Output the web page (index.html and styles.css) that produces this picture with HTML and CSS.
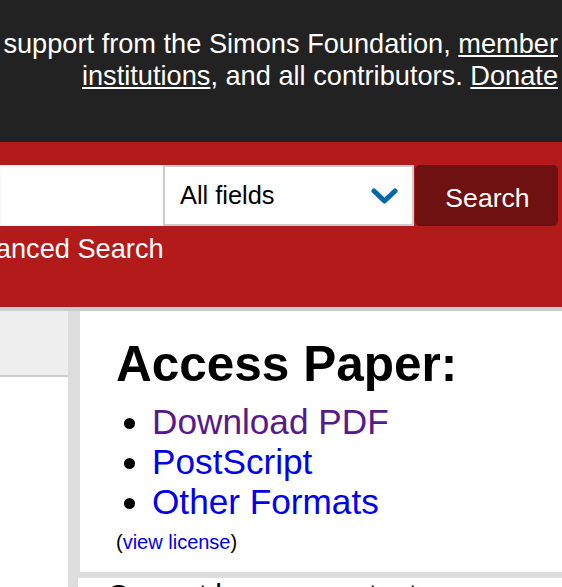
FILE: index.html
```html
<!DOCTYPE html>
<html lang="en">
<head>
	<meta charset="UTF-8">
	<title>Access Paper</title>
<link rel="stylesheet" href="styles.css">
</head>
<body>
	<div class="support">
		<div class="line">support from the Simons Foundation,&nbsp;<a href="#">member</a></div>
		<div class="line"><a href="#">institutions</a>, and all contributors.&nbsp;<a href="#">Donate</a></div>
	</div>
	<div class="searchbar">
		<form class="search-row">
			<input type="text" class="query" aria-label="Search term">
			<div class="field">
				<span>All fields</span>
				<svg width="27" height="17" viewBox="0 0 27 17"><path d="M3 3 L13.5 13 L24 3" fill="none" stroke="#0068ac" stroke-width="5" stroke-linecap="round" stroke-linejoin="round"/></svg>
			</div>
			<button type="button" class="go">Search</button>
		</form>
		<a href="#" class="advanced">Advanced Search</a>
	</div>
	<div class="main">
		<div class="left">
			<div class="left-top"></div>
		</div>
		<div class="extra">
			<div class="full-text">
				<h2>Access Paper:</h2>
				<ul>
					<li><a href="#" class="visited">Download PDF</a></li>
					<li><a href="#">PostScript</a></li>
					<li><a href="#">Other Formats</a></li>
				</ul>
				<div class="license">(<a href="#">view license</a>)</div>
			</div>
			<div class="browse">Current browse context:</div>
		</div>
	</div>
</body>
</html>
```

FILE: styles.css
```css
body{
	margin: 0;
	font-family: "Liberation Sans", Arial, sans-serif;
	overflow: hidden;
}
a{
	color: #00e;
	text-decoration: none;
}
.support{
	background: #222;
	color: #fff;
	height: 142px;
	box-sizing: border-box;
	padding: 28px 4px 0 0;
	font-size: 27.2px;
}
.line{
	display: flex;
	justify-content: flex-end;
	white-space: nowrap;
}
.support a{
	color: #fff;
	text-decoration: underline;
}
.searchbar{
	background: #b31b1b;
	height: 165px;
	box-sizing: border-box;
	padding-top: 23px;
}
.search-row{
	display: flex;
	margin: 0;
	height: 61px;
}
.query{
	width: 163px;
	border: 0;
	margin: 0;
	padding: 0;
	box-sizing: border-box;
	box-shadow: inset 0 2px 3px rgba(0,0,0,.08);
}
.field{
	width: 251px;
	box-sizing: border-box;
	border: 2px solid #ccc;
	background: #fff;
	display: flex;
	align-items: center;
	justify-content: space-between;
	padding: 0 14px 0 15px;
	font-size: 25.4px;
	color: #000;
}
.field svg{
	margin-top: 2px;
}
.go{
	margin-left: 1px;
	width: 143px;
	border: 0;
	border-radius: 5px;
	background: #6f1111;
	color: #fff;
	font-family: "Liberation Sans", Arial, sans-serif;
	font-size: 26.6px;
	padding: 5px 0 0 2px;
}
.advanced{
	display: block;
	margin-top: 7px;
	text-indent: -51px;
	color: #fff;
	font-size: 27.2px;
}
.main{
	display: flex;
	border-top: 4px solid #ccc;
	height: 280px;
}
.left{
	width: 68px;
	flex: none;
}
.left-top{
	height: 64px;
	background: #eee;
	border-bottom: 2px solid #ccc;
}
.extra{
	flex: 1;
	background: #ddd;
	padding-left: 10px;
}
.full-text{
	background: #fff;
	margin-left: 2px;
	height: 261px;
	box-sizing: border-box;
	padding: 24px 36px 0;
}
h2{
	margin: 0;
	font-size: 49.5px;
	font-weight: bold;
	color: #000;
}
ul{
	margin: 10px 0 0;
	padding-left: 36px;
	font-size: 35.2px;
}
a.visited{
	color: #551a8b;
}
.license{
	margin-top: 9px;
	font-size: 20px;
	color: #000;
}
.browse{
	background: #fff;
	margin-top: 6px;
	padding-left: 29px;
	font-size: 30px;
	height: 40px;
}
```
